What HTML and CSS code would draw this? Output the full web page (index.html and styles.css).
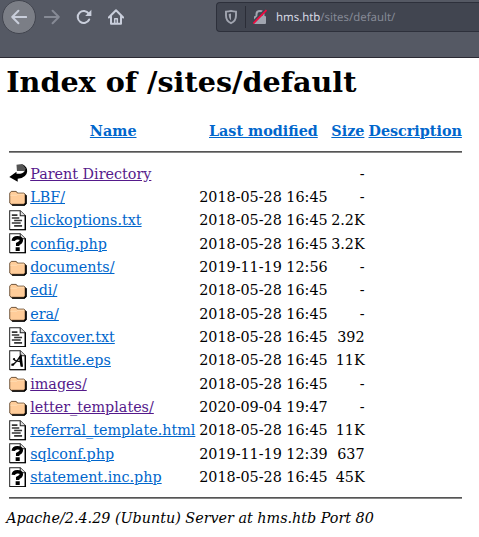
FILE: index.html
```html
<!DOCTYPE html>
<html lang="en">
<head>
<meta charset="utf-8">
<title>Index of /sites/default</title>
<link rel="stylesheet" href="styles.css">
</head>
<body>
<svg class="defs" aria-hidden="true">
  <symbol id="back" viewBox="0 0 20 22">
    <path d="M8 2L14 1L18.500 5V9.500L15 8.500H8.500Z" fill="#555"/>
    <path d="M14 1Q19.800 4 19.500 9Q19 15.500 9.300 17V20L.3 15L8 9.500V11.500Q14.500 12 17 8.500L18 6Z" fill="#000"/>
  </symbol>
  <symbol id="folder" viewBox="0 0 20 22">
    <g transform="translate(0 1.500) scale(.96 .92)">
      <path d="M2.500 4H8.500L10 6H17.500L19.500 8V18L17.500 20H3.500L1 17.500V6Z" fill="#111"/>
      <path d="M2.500 3.500H8L9.500 5.500H16.500L18 7V16.500L16.500 18.500H2.500L.8 17V5.500Z" fill="#fc9" stroke="#65482e"/>
      <path d="M1.500 8H8.500L10 6.800H17" fill="none" stroke="#ffe0b8"/>
      <path d="M19 8V17.500L17 19.500H3.500" fill="none" stroke="#000" stroke-width="1.600"/>
    </g>
  </symbol>
  <symbol id="page" viewBox="0 0 20 22">
    <path d="M.7 .7H12L17.500 6.200V21.200H.7Z" fill="#fff" stroke="#222" stroke-width="1.100"/>
    <path d="M12 .7V6.200H17.500" fill="#ddd" stroke="#222" stroke-width="1.100"/>
    <path d="M17.500 6V21.300H1" fill="none" stroke="#000" stroke-width="1.500"/>
  </symbol>
  <symbol id="text" viewBox="0 0 20 22">
    <use href="#page" width="20" height="22"/>
    <path d="M3 5.500H9M3 8.500H11M5.500 11.300H14M3 14H12.500M5.500 17H14" stroke="#333" stroke-width="1.700"/>
  </symbol>
  <symbol id="unknown" viewBox="0 0 20 22">
    <use href="#page" width="20" height="22"/>
    <path d="M4.600 8.500Q4.800 5 9 5Q13.500 5 13.200 8Q13 10 9.300 11.800V14" fill="none" stroke="#000" stroke-width="3.700"/>
    <path d="M7.100 15.300H11.500V19.200H7.100Z"/>
  </symbol>
  <symbol id="font" viewBox="0 0 20 22">
    <use href="#page" width="20" height="22"/>
    <path d="M3.500 16Q7 14.500 12.500 6L13.500 17.500M4.500 9.500Q7 12.500 14 12.300" fill="none" stroke="#111" stroke-width="1.500"/>
    <path d="M10.500 7.500L13.500 5L15 18H12.500ZM2.500 14.800L6 14.300L5 17H2.500ZM4 9L6.500 8.500L6 11.500Z"/>
  </symbol>
</svg>
<header class="toolbar">
  <nav class="nav">
    <span class="button back"><svg viewBox="0 0 16 16"><path d="M15.200 8H1.200M7.400 1.800L1.200 8L7.400 14.200"/></svg></span>
    <span class="button forward"><svg viewBox="0 0 16 16"><path d="M.8 8H14.800M8.600 1.800L14.800 8L8.600 14.200"/></svg></span>
    <span class="button"><svg viewBox="0 0 16 16"><path d="M13.200 10.500A6 6 0 1 1 12.700 4.600"/><path class="solid" d="M15.400 .8V7H9.200Z"/></svg></span>
    <span class="button"><svg viewBox="0 0 16 16"><path d="M.8 8.500L8 1.300L15.200 8.500M3 7.500V14.800H13V7.500"/><path d="M6.700 14V9.700H9.300V14" stroke-width="1.500"/></svg></span>
  </nav>
  <div class="address">
    <svg class="shield" viewBox="0 0 14 16"><path d="M7 1.800Q9.500 2.500 12 2.600V6.500Q12 12 7 14.200Q2 12 2 6.500V2.600Q4.500 2.500 7 1.800Z" fill="none" stroke="#a1a5b0" stroke-width="1.900"/><path d="M7 4.500V11.300Q4.700 9.500 4.700 5Z" fill="#a1a5b0"/></svg>
    <span class="divider"></span>
    <svg class="lock" viewBox="0 0 16 16"><path d="M4.500 8V5Q4.500 2 8 2Q11.500 2 11.500 5V8" fill="none" stroke="#a1a5b0" stroke-width="2"/><rect x="2" y="7" width="12" height="8" rx="1" fill="#a1a5b0"/><path d="M1.300 13.300L14 .5" stroke="#414550" stroke-width="3"/><path d="M1.300 14.500L14.500 1.200" stroke="#f5083f" stroke-width="1.700"/></svg>
    <span class="url"><b>hms.htb</b>/sites/default/</span>
  </div>
</header>
<main>
  <h1>Index of /sites/default</h1>
  <table>
    <colgroup><col class="c-icon"><col class="c-name"><col class="c-date"><col class="c-size"><col class="c-desc"></colgroup>
    <thead>
      <tr><th></th><th><a>Name</a></th><th><a>Last modified</a></th><th><a>Size</a></th><th><a>Description</a></th></tr>
      <tr class="rule"><td colspan="5"><hr></td></tr>
    </thead>
    <tbody>
      <tr><td><svg><use href="#back"/></svg></td><td><a class="visited">Parent Directory</a></td><td></td><td>-</td><td></td></tr>
      <tr><td><svg><use href="#folder"/></svg></td><td><a>LBF/</a></td><td>2018-05-28 16:45</td><td>-</td><td></td></tr>
      <tr><td><svg><use href="#text"/></svg></td><td><a>clickoptions.txt</a></td><td>2018-05-28 16:45</td><td>2.2K</td><td></td></tr>
      <tr><td><svg><use href="#unknown"/></svg></td><td><a>config.php</a></td><td>2018-05-28 16:45</td><td>3.2K</td><td></td></tr>
      <tr><td><svg><use href="#folder"/></svg></td><td><a>documents/</a></td><td>2019-11-19 12:56</td><td>-</td><td></td></tr>
      <tr><td><svg><use href="#folder"/></svg></td><td><a>edi/</a></td><td>2018-05-28 16:45</td><td>-</td><td></td></tr>
      <tr><td><svg><use href="#folder"/></svg></td><td><a>era/</a></td><td>2018-05-28 16:45</td><td>-</td><td></td></tr>
      <tr><td><svg><use href="#text"/></svg></td><td><a>faxcover.txt</a></td><td>2018-05-28 16:45</td><td>392</td><td></td></tr>
      <tr><td><svg><use href="#font"/></svg></td><td><a>faxtitle.eps</a></td><td>2018-05-28 16:45</td><td>11K</td><td></td></tr>
      <tr><td><svg><use href="#folder"/></svg></td><td><a class="visited">images/</a></td><td>2018-05-28 16:45</td><td>-</td><td></td></tr>
      <tr><td><svg><use href="#folder"/></svg></td><td><a class="visited">letter_templates/</a></td><td>2020-09-04 19:47</td><td>-</td><td></td></tr>
      <tr><td><svg><use href="#text"/></svg></td><td><a>referral_template.html</a></td><td>2018-05-28 16:45</td><td>11K</td><td></td></tr>
      <tr><td><svg><use href="#unknown"/></svg></td><td><a>sqlconf.php</a></td><td>2019-11-19 12:39</td><td>637</td><td></td></tr>
      <tr><td><svg><use href="#unknown"/></svg></td><td><a>statement.inc.php</a></td><td>2018-05-28 16:45</td><td>45K</td><td></td></tr>
    </tbody>
  </table>
  <hr class="end">
  <address>Apache/2.4.29 (Ubuntu) Server at hms.htb Port 80</address>
</main>
</body>
</html>
```
FILE: styles.css
```css
* { box-sizing: border-box; }
body { margin: 0; background: #fff; color: #000; font: 14.340px/20px "DejaVu Serif", serif; overflow: hidden; }
.defs { display: none; }
.toolbar { display: flex; height: 58px; background: #555964; border-bottom: 1px solid #2b2a33; }
.nav { display: flex; align-items: center; height: 34px; padding-left: 2px; width: 216px; flex: none; }
.button { width: 32px; height: 32px; display: flex; align-items: center; justify-content: center; flex: none; }
.button svg { width: 16px; height: 16px; fill: none; stroke: #c9cedb; stroke-width: 2; stroke-linecap: round; stroke-linejoin: round; }
.button svg .solid { fill: #c9cedb; stroke: none; }
.button.back { width: 34px; height: 34px; border: 1px solid #42454f; border-radius: 50%; background: #7b7e86; }
.button.forward svg { stroke: #868a95; }
.address { display: flex; align-items: center; flex: 1; height: 30px; margin-top: 2px; padding-left: 7px; background: #414550; border: 1px solid #2d303b; border-right: 0; border-radius: 4px 0 0 4px; }
.shield { width: 14px; height: 16px; }
.divider { width: 1px; height: 22px; margin: 0 6px 0 7px; background: #2b2d37; }
.lock { width: 16px; height: 16px; }
.url { margin-left: 8px; margin-top: 2px; font: 11.400px/18px "Noto Sans", sans-serif; text-rendering: geometricPrecision; color: #858995; white-space: nowrap; }
.url b { font-weight: 400; color: #d5d8e2; }
main { padding: 7px 0 0 6.200px; }
h1 { margin: 0; font-size: 28.640px; line-height: 34px; font-weight: 700; white-space: nowrap; }
table { width: 453px; margin: 18px 0 0 3px; border-collapse: collapse; table-layout: fixed; }
.c-icon { width: 21px; }
.c-name { width: 169px; }
.c-date { width: 132px; }
.c-size { width: 37px; }
.c-desc { width: 94px; }
th, td { padding: 0; white-space: nowrap; text-align: left; }
th { height: 28px; text-align: center; }
th:nth-child(2), td:nth-child(2) { padding-right: 3px; }
th:nth-child(3), th:nth-child(4), td:nth-child(4) { padding-right: 3.600px; }
td:nth-child(4) { text-align: right; }
tbody tr { height: 23.330px; }
tbody td { height: 23.330px; line-height: 20px; }
td svg { display: block; width: 18.700px; height: 20.500px; }
.rule td { height: 17px; padding-bottom: 3px; }
hr { height: 2px; margin: 0; border: 0; border-top: 1px solid #555; border-bottom: 1px solid #888; }
.end { width: 453px; margin: 8px 0 0 3px; }
a { color: #0066cc; text-decoration: underline; }
a.visited { color: #551a8b; }
address { margin-top: 9px; font-style: italic; }
```
